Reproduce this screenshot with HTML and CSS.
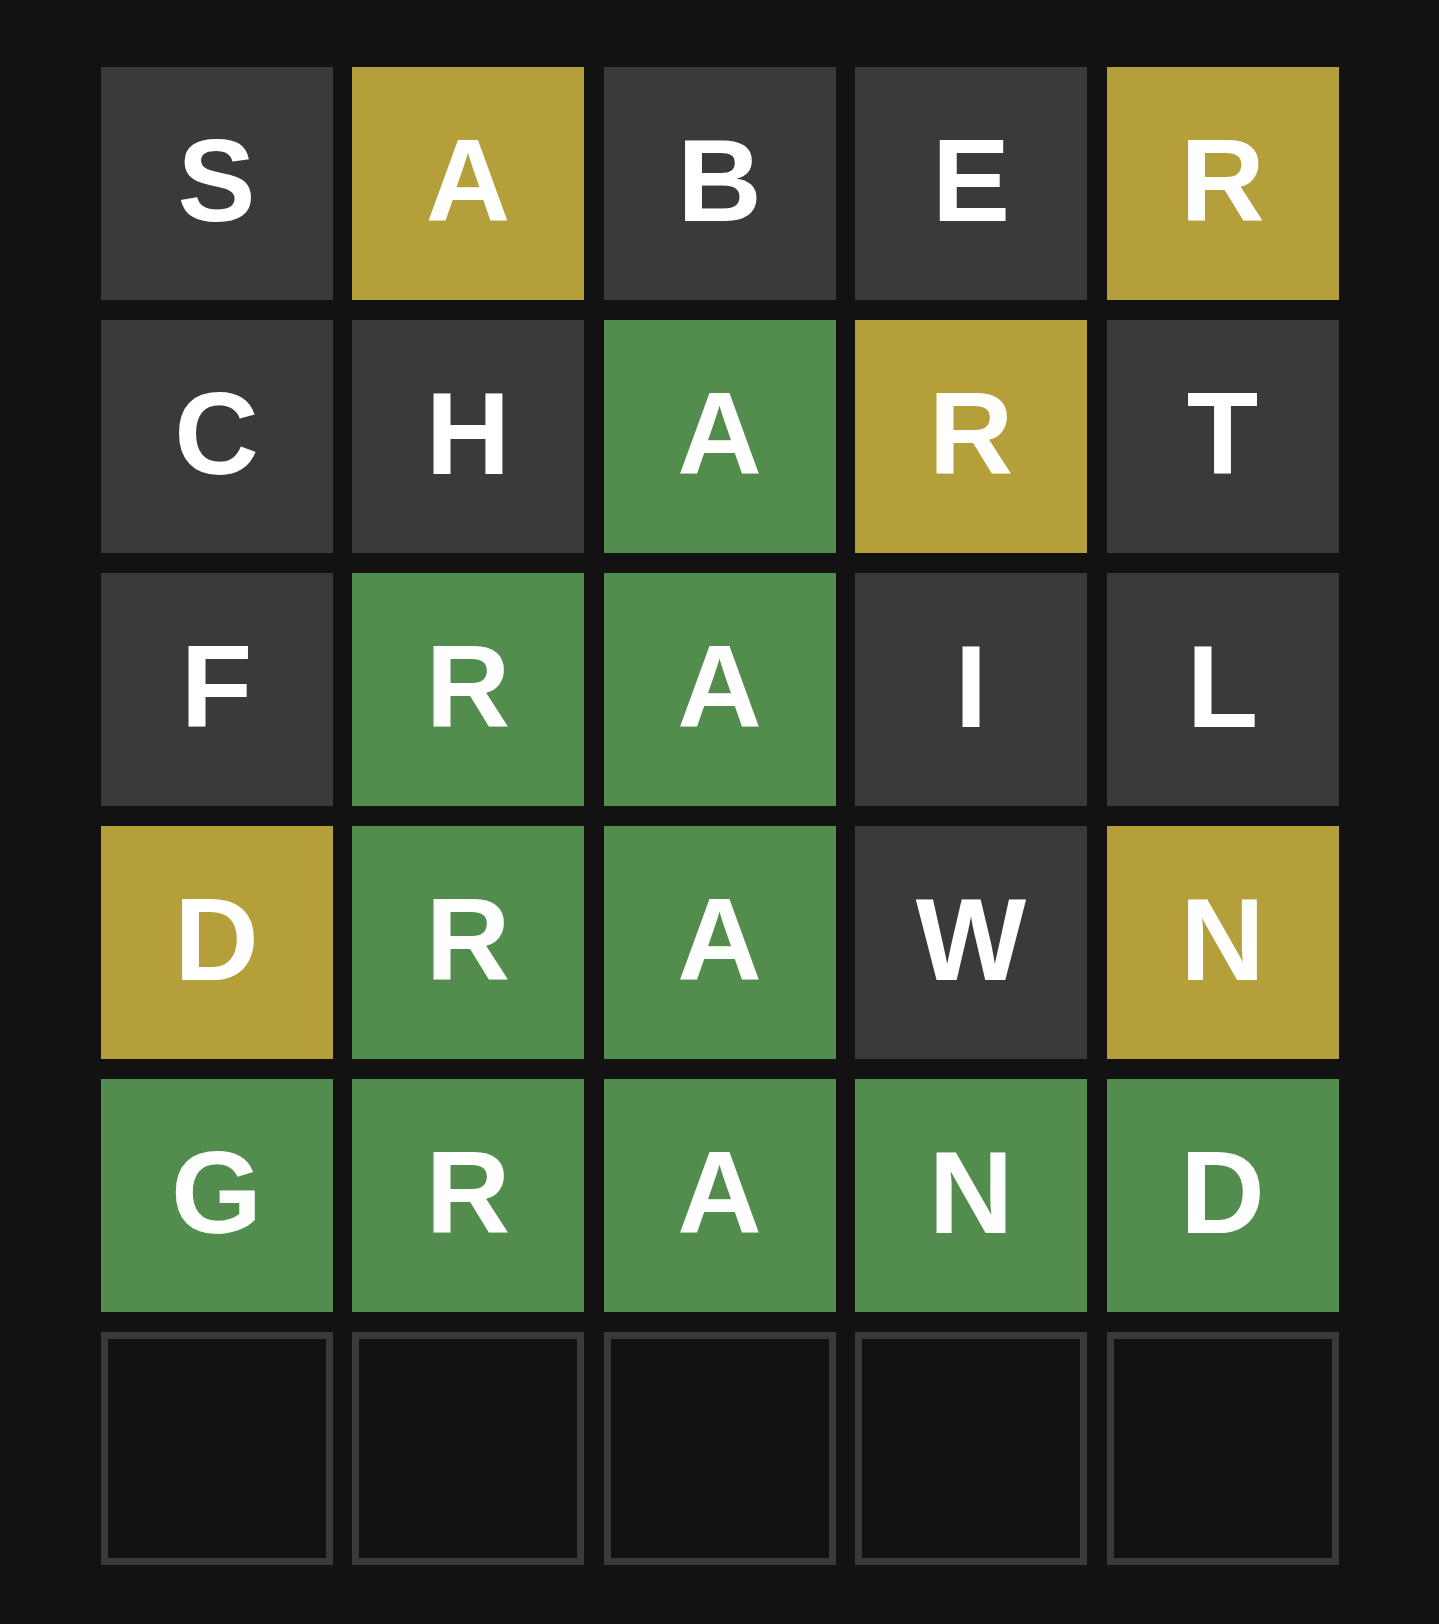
FILE: index.html
```html
<!DOCTYPE html>
<html lang="en">
<head>
<meta charset="utf-8">
<title>Wordle board</title>
<link rel="stylesheet" href="styles.css">
</head>
<body>
<main class="board">
  <div class="tile absent">S</div>
  <div class="tile present">A</div>
  <div class="tile absent">B</div>
  <div class="tile absent">E</div>
  <div class="tile present">R</div>

  <div class="tile absent">C</div>
  <div class="tile absent">H</div>
  <div class="tile correct">A</div>
  <div class="tile present">R</div>
  <div class="tile absent">T</div>

  <div class="tile absent">F</div>
  <div class="tile correct">R</div>
  <div class="tile correct">A</div>
  <div class="tile absent">I</div>
  <div class="tile absent">L</div>

  <div class="tile present">D</div>
  <div class="tile correct">R</div>
  <div class="tile correct">A</div>
  <div class="tile absent">W</div>
  <div class="tile present">N</div>

  <div class="tile correct">G</div>
  <div class="tile correct">R</div>
  <div class="tile correct">A</div>
  <div class="tile correct">N</div>
  <div class="tile correct">D</div>

  <div class="tile empty"></div>
  <div class="tile empty"></div>
  <div class="tile empty"></div>
  <div class="tile empty"></div>
  <div class="tile empty"></div>
</main>
</body>
</html>
```

FILE: styles.css
```css
html, body {
  margin: 0;
  padding: 0;
  background: #121213;
}

body {
  min-height: 1624px;
  font-family: "Liberation Sans", Arial, sans-serif;
}

.board {
  box-sizing: border-box;
  width: 1238px;
  margin: 0 auto;
  padding-top: 67px;
  display: grid;
  grid-template-columns: repeat(5, 1fr);
  grid-auto-rows: 233px;
  column-gap: 19.5px;
  row-gap: 20px;
}

.tile {
  box-sizing: border-box;
  display: flex;
  align-items: center;
  justify-content: center;
  padding-bottom: 6px;
  color: #ffffff;
  font-weight: 700;
  font-size: 117px;
  line-height: 1;
  text-transform: uppercase;
}

.absent { background: #3a3a3c; }
.present { background: #b59f3b; }
.correct { background: #538d4e; }

.empty {
  background: transparent;
  border: 7px solid #3a3a3c;
}
```
